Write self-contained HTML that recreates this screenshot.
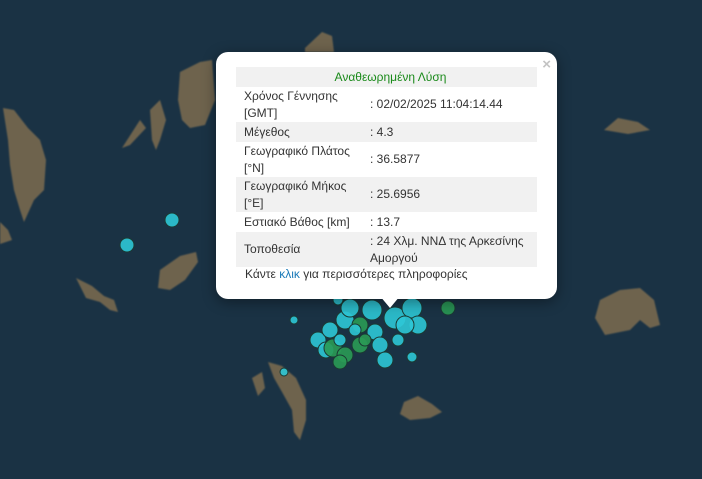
<!DOCTYPE html>
<html><head><meta charset="utf-8"><style>
html,body{margin:0;padding:0;width:702px;height:479px;overflow:hidden;background:#1a3244;font-family:"Liberation Sans","DejaVu Sans",sans-serif}
svg{position:absolute;left:0;top:0}
.pop{position:absolute;left:216px;top:52px;width:341px;height:247px;background:#fff;border-radius:12px;box-shadow:0 3px 14px rgba(0,0,0,.4)}
.tip{position:absolute;left:380px;top:296px;width:0;height:0;border-left:10px solid transparent;border-right:10px solid transparent;border-top:12px solid #fff}
.x{position:absolute;right:6px;top:4px;color:#c3c3c3;font:bold 15px "Liberation Sans",sans-serif}
table{position:absolute;left:20px;top:15px;width:301px;border-collapse:collapse;font-size:12px;color:#333;line-height:17px}
td{padding:0 0 0 8px;vertical-align:middle}
tr.g{background:#f1f1f1}
td.v{padding-left:0}
.h{text-align:center;color:#1a8a1a;height:20px}
.lk{position:absolute;left:29px;top:215px;font-size:12px;color:#333}
.lk span{color:#1a7ab8}
</style></head><body>
<svg width="702" height="479">
<defs><filter id="b"><feGaussianBlur stdDeviation="0.8"/></filter></defs>
<g fill="#6e634e" filter="url(#b)">
<path d="M3 108 L14 110 L28 128 L40 140 L46 160 L44 190 L34 200 L24 222 L20 210 L14 190 L10 165 L8 140 Z"/>
<path d="M180 72 L200 62 L212 60 L215 100 L205 125 L190 128 L182 120 L178 100 Z"/>
<path d="M150 110 L160 100 L166 120 L160 140 L156 150 L152 140 Z"/>
<path d="M140 120 L146 128 L130 145 L122 148 Z"/>
<path d="M305 48 L322 32 L332 36 L334 52 L305 52 Z"/>
<path d="M160 270 L180 256 L196 252 L198 262 L185 280 L170 290 L158 288 Z"/>
<path d="M76 278 L92 286 L104 296 L114 300 L118 312 L110 310 L100 302 L86 298 Z"/>
<path d="M0 222 L8 230 L12 240 L0 244 Z"/>
<path d="M600 300 L620 290 L640 288 L654 300 L660 325 L650 328 L640 320 L630 330 L605 335 L595 318 Z"/>
<path d="M268 362 L282 366 L296 378 L306 400 L306 420 L300 440 L294 432 L292 410 L282 392 L274 378 Z"/>
<path d="M252 378 L262 372 L265 388 L258 396 Z"/>
<path d="M404 402 L418 396 L432 404 L442 412 L430 418 L410 420 L400 414 Z"/>
<path d="M604 130 L618 118 L638 122 L650 130 L628 134 Z"/>
<path d="M542 292 L548 278 L550 296 Z"/>
</g>
<g stroke="#1b3a33" stroke-width="1" fill-opacity=".9">
<circle cx="172" cy="220" r="7" fill="#2dc6d6"/>
<circle cx="127" cy="245" r="7" fill="#2dc6d6"/>
<circle cx="294" cy="320" r="4" fill="#2dc6d6"/>
<circle cx="448" cy="308" r="7" fill="#2a9a55"/>
<circle cx="412" cy="357" r="5" fill="#2dc6d6"/>
<circle cx="284" cy="372" r="4" fill="#2dc6d6"/>
<circle cx="318" cy="340" r="8" fill="#2dc6d6"/>
<circle cx="326" cy="350" r="8" fill="#2dc6d6"/>
<circle cx="333" cy="348" r="9" fill="#2a9a55"/>
<circle cx="345" cy="355" r="8" fill="#2a9a55"/>
<circle cx="340" cy="362" r="7" fill="#2a9a55"/>
<circle cx="360" cy="345" r="8" fill="#2a9a55"/>
<circle cx="330" cy="330" r="8" fill="#2dc6d6"/>
<circle cx="345" cy="320" r="9" fill="#2dc6d6"/>
<circle cx="360" cy="325" r="8" fill="#2a9a55"/>
<circle cx="375" cy="332" r="8" fill="#2dc6d6"/>
<circle cx="380" cy="345" r="8" fill="#2dc6d6"/>
<circle cx="385" cy="360" r="8" fill="#2dc6d6"/>
<circle cx="350" cy="308" r="9" fill="#2dc6d6"/>
<circle cx="372" cy="310" r="10" fill="#2dc6d6"/>
<circle cx="395" cy="318" r="11" fill="#2dc6d6"/>
<circle cx="412" cy="308" r="10" fill="#2dc6d6"/>
<circle cx="418" cy="325" r="9" fill="#2dc6d6"/>
<circle cx="405" cy="325" r="9" fill="#2dc6d6"/>
<circle cx="340" cy="340" r="6" fill="#2dc6d6"/>
<circle cx="365" cy="340" r="6" fill="#2a9a55"/>
<circle cx="355" cy="330" r="6" fill="#2dc6d6"/>
<circle cx="398" cy="340" r="6" fill="#2dc6d6"/>
<circle cx="338" cy="300" r="5" fill="#2dc6d6"/>
</g>
</svg>
<div class="pop">
<div class="x">×</div>
<table>
<tr class="g"><td colspan="2" class="h">Αναθεωρημένη Λύση</td></tr>
<tr style="height:35px"><td style="width:126px">Χρόνος Γέννησης<br>[GMT]</td><td class="v">: 02/02/2025 11:04:14.44</td></tr>
<tr class="g" style="height:20px"><td>Μέγεθος</td><td class="v">: 4.3</td></tr>
<tr style="height:35px"><td>Γεωγραφικό Πλάτος<br>[°N]</td><td class="v">: 36.5877</td></tr>
<tr class="g" style="height:35px"><td>Γεωγραφικό Μήκος<br>[°E]</td><td class="v">: 25.6956</td></tr>
<tr style="height:20px"><td>Εστιακό Βάθος [km]</td><td class="v">: 13.7</td></tr>
<tr class="g" style="height:35px"><td>Τοποθεσία</td><td class="v">: 24 Χλμ. ΝΝΔ της Αρκεσίνης<br>Αμοργού</td></tr>
</table>
<div class="lk">Κάντε <span>κλικ</span> για περισσότερες πληροφορίες</div>
</div>
<div class="tip"></div>
</body></html>
